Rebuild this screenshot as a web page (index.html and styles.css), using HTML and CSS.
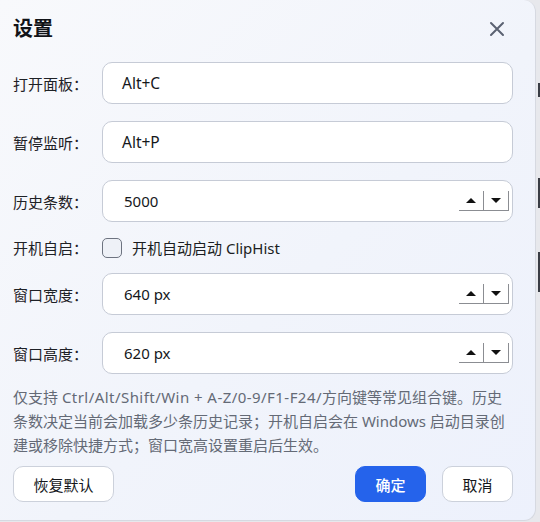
FILE: index.html
```html
<!DOCTYPE html>
<html lang="zh-CN">
<head>
<meta charset="utf-8">
<title>设置</title>
<link rel="stylesheet" href="styles.css">
</head>
<body>
<div class="desk">
  <div class="behind">
    <span class="mark m1"></span>
    <span class="mark m2"></span>
    <span class="mark m3"></span>
  </div>
  <div class="dialog">
    <header class="head">
      <h1 class="title">设置</h1>
      <button class="close" aria-label="关闭">
        <svg width="16" height="16" viewBox="0 0 16 16"><path d="M2 2L14 14M14 2L2 14" stroke="#5b6272" stroke-width="2" stroke-linecap="round" fill="none"/></svg>
      </button>
    </header>
    <div class="form">
      <div class="row">
        <span class="label">打开面板：</span>
        <div class="field"><span class="val">Alt+C</span></div>
      </div>
      <div class="row">
        <span class="label">暂停监听：</span>
        <div class="field"><span class="val">Alt+P</span></div>
      </div>
      <div class="row">
        <span class="label">历史条数：</span>
        <div class="field num"><span class="val">5000</span>
          <span class="spin"><span class="sb up"><i class="tri-up"></i></span><span class="sb down"><i class="tri-down"></i></span></span>
        </div>
      </div>
      <div class="row row-check">
        <span class="label">开机自启：</span>
        <label class="check"><span class="box"></span><span class="check-text">开机自动启动 ClipHist</span></label>
      </div>
      <div class="row">
        <span class="label">窗口宽度：</span>
        <div class="field num"><span class="val">640 px</span>
          <span class="spin"><span class="sb up"><i class="tri-up"></i></span><span class="sb down"><i class="tri-down"></i></span></span>
        </div>
      </div>
      <div class="row">
        <span class="label">窗口高度：</span>
        <div class="field num"><span class="val">620 px</span>
          <span class="spin"><span class="sb up"><i class="tri-up"></i></span><span class="sb down"><i class="tri-down"></i></span></span>
        </div>
      </div>
    </div>
    <p class="help">仅支持 <span class="keys">Ctrl/Alt/Shift/Win + A-Z/0-9/F1-F24/</span>方向键等常见组合键。历史条数决定当前会加载多少条历史记录；开机自启会在 Windows 启动目录创建或移除快捷方式；窗口宽高设置重启后生效。</p>
    <div class="actions">
      <button class="btn">恢复默认</button>
      <span class="spacer"></span>
      <button class="btn primary">确定</button>
      <button class="btn">取消</button>
    </div>
  </div>
</div>
</body>
</html>
```
FILE: styles.css
```css
* { box-sizing: border-box; }
html, body { margin: 0; padding: 0; }
body {
  background: #e7e8ec;
  font-family: "Segoe UI", "Noto Sans", "Noto Sans CJK SC", sans-serif;
  color: #1b1d22;
}
.desk {
  position: relative;
  width: 540px;
  height: 522px;
  overflow: hidden;
}
.behind { position: absolute; right: 0; top: 0; width: 3px; height: 522px; }
.mark { position: absolute; right: 0; width: 2px; background: #3a3d45; }
.m1 { top: 83px; height: 14px; }
.m2 { top: 178px; height: 30px; }
.m3 { top: 252px; height: 40px; }
.dialog {
  position: relative;
  width: 536px;
  height: 521px;
  padding: 15px 22px 0 13px;
  background: linear-gradient(135deg, #f8f9fc 0%, #f1f4fb 55%, #edf1fc 100%);
  border-right: 1px solid #d6d9e1;
  border-bottom: 1px solid #d6d9e1;
  border-radius: 0 12px 12px 0;
}
.head {
  display: flex;
  align-items: center;
  justify-content: space-between;
  height: 28px;
}
.title {
  margin: 0;
  font-size: 20px;
  font-weight: 700;
  line-height: 28px;
  color: #111318;
}
.close {
  border: 0;
  background: none;
  padding: 0;
  width: 16px;
  height: 16px;
  margin-right: 8px;
  display: flex;
}
.form {
  margin-top: 19px;
  display: flex;
  flex-direction: column;
  gap: 17px;
}
.row {
  display: flex;
  align-items: center;
}
.row-check { height: 17px; }
.label {
  width: 89px;
  flex: none;
  font-size: 15px;
  color: #1e2126;
}
.field {
  flex: 1;
  height: 42px;
  display: flex;
  align-items: center;
  padding-left: 19px;
  padding-right: 3px;
  background: #ffffff;
  border: 1px solid #c6cbd6;
  border-radius: 10px;
  font-size: 15.5px;
  color: #15171b;
}
.field.num { padding-left: 21px; font-size: 15px; }
.val { flex: 1; }
.spin { display: flex; height: 20px; }
.sb {
  width: 25px;
  height: 20px;
  display: flex;
  align-items: center;
  justify-content: center;
  border-right: 1px solid #8b8d92;
  border-bottom: 1px solid #8b8d92;
}
.tri-up, .tri-down {
  width: 0; height: 0;
  border-left: 5px solid transparent;
  border-right: 5px solid transparent;
}
.tri-up { border-bottom: 5px solid #111; }
.tri-down { border-top: 5px solid #111; }
.check {
  display: flex;
  align-items: center;
  gap: 10px;
  font-size: 15px;
  color: #1b1d22;
}
.box {
  width: 20px;
  height: 20px;
  border: 1.5px solid #6d7380;
  border-radius: 5px;
  background: #eef1f7;
}
.help {
  margin: 11px 0 0 0;
  font-size: 15px;
  line-height: 24px;
  color: #646a76;
}
.keys { letter-spacing: 0.45px; }
.actions {
  display: flex;
  gap: 16px;
  margin-top: 9px;
}
.spacer { flex: 1; }
.btn {
  height: 36px;
  width: 71px;
  border: 1px solid #ccd1db;
  border-radius: 10px;
  background: #ffffff;
  font-family: inherit;
  font-size: 15px;
  color: #15171b;
  padding: 0;
}
.actions .btn:first-child { width: 101px; }
.btn.primary {
  background: #2563eb;
  border-color: #2563eb;
  color: #ffffff;
  font-weight: 500;
}
```
